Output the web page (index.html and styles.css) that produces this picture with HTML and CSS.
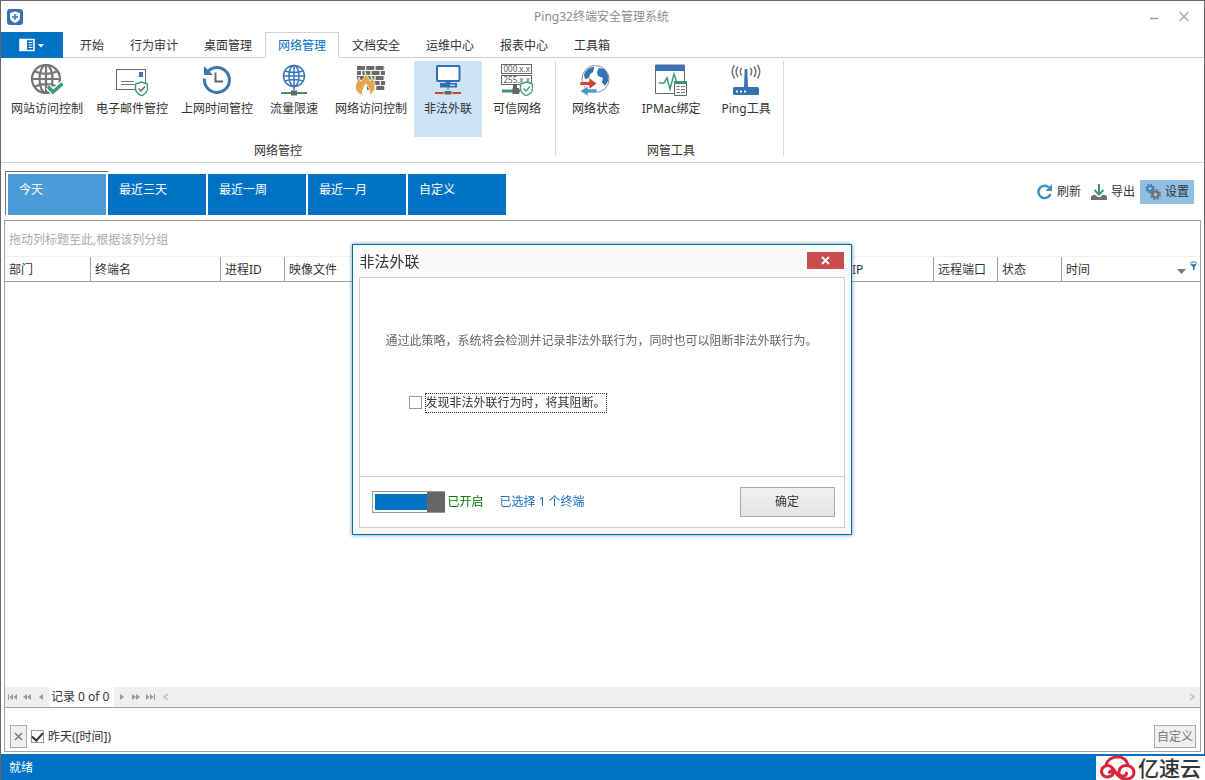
FILE: index.html
```html
<!DOCTYPE html>
<html lang="zh-CN">
<head>
<meta charset="utf-8">
<title>Ping32终端安全管理系统</title>
<link rel="stylesheet" href="styles.css">
</head>
<body>
<div class="window">
  <header class="titlebar">
    <svg class="app-icon" width="16" height="16" viewBox="0 0 16 16"><rect width="16" height="16" rx="3" fill="#3a6fb7"/><path d="M8 2.500l5 1.500v4.500c0 2.500-2 4-5 5.500-3-1.500-5-3-5-5.500V4z" fill="#fff"/><path d="M8 5v6M5 8h6" stroke="#3a6fb7" stroke-width="1.500"/></svg>
    <h1 class="title">Ping32终端安全管理系统</h1>
    <div class="window-buttons">
      <button class="plain" aria-label="最小化"><svg width="10" height="12" viewBox="0 0 10 12"><path d="M1 7.500h8" stroke="#999" stroke-width="1.500"/></svg></button>
      <button class="plain" aria-label="关闭"><svg width="12" height="12" viewBox="0 0 12 12"><path d="M1.500 1l9 9M10.500 1l-9 9" stroke="#aaa" stroke-width="1.500"/></svg></button>
    </div>
  </header>

  <nav class="tabs">
    <button class="file-button" aria-label="菜单"><svg width="26" height="14" viewBox="0 0 26 14"><rect x="1" y="1.500" width="14" height="11" fill="#0072c6" stroke="#fff" stroke-width="1.500"/><path d="M1 1h7v12H1z" fill="#fff"/><path d="M9.500 4.500h4M9.500 7h4M9.500 9.500h4" stroke="#fff"/><path d="M19 6h6l-3 3.500z" fill="#fff"/></svg></button>
    <button class="tab">开始</button>
    <button class="tab">行为审计</button>
    <button class="tab">桌面管理</button>
    <button class="tab selected">网络管理</button>
    <button class="tab">文档安全</button>
    <button class="tab">运维中心</button>
    <button class="tab">报表中心</button>
    <button class="tab">工具箱</button>
  </nav>

  <section class="ribbon">
    <div class="group">
      <div class="items">
        <button class="item"><svg width="32" height="32" viewBox="0 0 32 32" fill="none"><g stroke="#757575" stroke-width="2.200"><circle cx="15" cy="15" r="14"/><ellipse cx="15" cy="15" rx="6.500" ry="14"/><path d="M15 1v28M1 15h28M4 7.500c7 3 15 3 22 0M4 22.500c7-3 15-3 22 0"/></g><path d="M17 22.500l5 5.500 9.500-8.500" stroke="#fff" stroke-width="6"/><path d="M17 22.500l5 5.500 9.500-8.500" stroke="#3a9d78" stroke-width="3.500"/></svg><span>网站访问控制</span></button>
        <button class="item"><svg width="32" height="32" viewBox="0 0 32 32" fill="none"><rect x=".5" y="5.500" width="29" height="20" stroke="#666"/><path d="M23 8h4v5h-4z" fill="#3e76b5"/><path d="M5 17.500h13M5 20.500h13" stroke="#777"/><path d="M25.500 18l6 2v5c0 3-2.500 5-6 7-3.500-2-6-4-6-7v-5z" fill="#fff" stroke="#3a9d78" stroke-width="1.500"/><path d="M22.500 24.500l2.500 2.500 4-4.500" stroke="#666" stroke-width="1.500"/></svg><span>电子邮件管控</span></button>
        <button class="item"><svg width="32" height="32" viewBox="0 0 32 32" fill="none"><path d="M3.500 14.500A12.500 12.500 0 1 0 16 3.500c-4 0-7 1.500-9.500 4.500" stroke="#3e76ab" stroke-width="3"/><path d="M3 2v9h9z" fill="#3e76ab"/><path d="M14.500 8.500v9h7.500" stroke="#666" stroke-width="2"/></svg><span>上网时间管控</span></button>
        <button class="item"><svg width="32" height="32" viewBox="0 0 32 32" fill="none"><g stroke="#3874b8" stroke-width="1.500"><circle cx="16" cy="12" r="10.500"/><ellipse cx="16" cy="12" rx="5" ry="10.500"/><path d="M16 1.500V26M5.500 12h21M7 7c6 2 12 2 18 0M7 17c6-2 12-2 18 0"/></g><path d="M3 29h26" stroke="#3f946f" stroke-width="2"/><path d="M13 26.500h6v5h-6z" fill="#666"/></svg><span>流量限速</span></button>
        <button class="item"><svg width="32" height="32" viewBox="0 0 32 32" fill="none"><g stroke="#6a6a6a" stroke-width="4"><path d="M2 4h28" stroke-dasharray="8 1.300"/><path d="M2 9h28" stroke-dasharray="4 1.300 8 1.300 8 1.300"/><path d="M2 14h28" stroke-dasharray="8 1.300"/><path d="M4 19h26" stroke-dasharray="6 1.300"/><path d="M12 24h18" stroke-dasharray="8 1.300"/></g><path d="M10 7c1 5 4 6 5 10 1-1 1.500-2 1-5 3 4 4.500 7 4 11-.5 4-3 7-6 8.500 2-4 0-8-3.500-12-1 4-4.500 7-2.500 12C3 30 0 26 .5 22c.5-3 2-5 3.500-9l1.500 4C9 15 10.500 12 10 7z" fill="#e3a64f" stroke="#fff" stroke-width=".7"/></svg><span>网络访问控制</span></button>
        <button class="item active"><svg width="32" height="32" viewBox="0 0 32 32" fill="none"><rect x="5" y="2" width="22.500" height="15" rx="1" fill="#fff" stroke="#2f70b5" stroke-width="2"/><path d="M16 17v3" stroke="#2f70b5" stroke-width="5"/><path d="M8 19h17v4.500H8z" fill="#2f70b5"/><path d="M18 21.200h5" stroke="#fff"/><path d="M16 23v4" stroke="#666"/><path d="M3 29h26" stroke="#cf4433" stroke-width="2"/><path d="M12 26.500h8v4.500h-8z" fill="#666" stroke="#cde4f6"/></svg><span>非法外联</span></button>
        <button class="item"><svg width="32" height="32" viewBox="0 0 32 32" fill="none"><g stroke="#666"><rect x=".5" y=".5" width="30" height="9"/><rect x=".5" y="11.500" width="30" height="9"/></g><g class="icon-digits" fill="#555"><text x="2.500" y="8">000.x.x</text><text x="2.500" y="19">255.x.x</text></g><path d="M1 27h18" stroke="#3f946f" stroke-width="3"/><path d="M14 21v3" stroke="#666" stroke-width="4"/><path d="M11.500 24h6.500v6h-6.500z" fill="#666"/><path d="M25.500 18l6 2v5c0 3-2.500 5-6 7-3.500-2-6-4-6-7v-5z" fill="#fff" stroke="#4b9e81" stroke-width="1.500"/><path d="M22.500 24.500l2.500 2.500 4-4.500" stroke="#4b9e81" stroke-width="1.500"/></svg><span>可信网络</span></button>
      </div>
      <div class="group-name">网络管控</div>
    </div>
    <div class="group tools">
      <div class="items">
        <button class="item"><svg width="32" height="32" viewBox="0 0 32 32" fill="none"><circle cx="15.500" cy="15" r="13.500" fill="#fff" stroke="#888"/><path d="M14 3c-5 0-9 4-10 8l1 4 4-1 1-4 3-2 1-3zM19 4l5 1c3 3 5 6 4 12l-3 5-3-4 1-4-5-2-1-4z" fill="#3472b4"/><path d="M0 17.500h9v-4l8 6-8 6v-4H0z" fill="#d4452f" stroke="#fff" stroke-width=".8"/><path d="M17 25H8v-3l-8 5 8 5v-3h9z" fill="#4a9bc8" stroke="#fff" stroke-width=".6"/></svg><span>网络状态</span></button>
        <button class="item"><svg width="32" height="32" viewBox="0 0 32 32" fill="none"><path d="M.5 1v28.500h29V1z" fill="#fff" stroke="#666"/><path d="M0 1h30v6H0z" fill="#3c73b5"/><path d="M4 19h5l3-5 3 11 4-15 3 9h3" stroke="#3a9d78" stroke-width="1.500"/><path d="M19.500 17.500h12v14h-12z" fill="#fff" stroke="#666"/><path d="M19 17h13v3H19z" fill="#3f946f"/><path d="M21.500 22.500h3M26 22.500h4M21.500 25.500h3M26 25.500h4M21.500 28.500h3M26 28.500h4" stroke="#777"/></svg><span>IPMac绑定</span></button>
        <button class="item"><svg width="32" height="32" viewBox="0 0 32 32" fill="none"><path d="M14 23l.7-18h2.600l.7 18z" fill="#3c73b5"/><rect x="3" y="23" width="26" height="8" rx="1.500" fill="#3472ac"/><path d="M6 27.500h2M10 27.500h2M14 27.500h2" stroke="#fff" stroke-width="2"/><path d="M11.500 4c-1.500 2.500-1.500 5 0 7.500M8 2.500c-2.500 3.500-2.500 7 0 10.500M4.500 1C1.500 5.500 1.500 10 4.500 14.500M20.500 4c1.500 2.500 1.500 5 0 7.500M24 2.500c2.500 3.500 2.500 7 0 10.500M27.500 1c3 4.500 3 9 0 13.500" stroke="#777" stroke-width="1.500"/></svg><span>Ping工具</span></button>
      </div>
      <div class="group-name">网管工具</div>
    </div>
  </section>

  <section class="toolbar">
    <div class="ranges">
      <button class="range current">今天</button>
      <button class="range">最近三天</button>
      <button class="range">最近一周</button>
      <button class="range">最近一月</button>
      <button class="range">自定义</button>
    </div>
    <div class="actions">
      <button class="action"><svg width="16" height="16" viewBox="0 0 16 16" fill="none"><path d="M12 3.500A6.200 6.200 0 1 0 13.500 10" stroke="#3f93ba" stroke-width="2.400"/><path d="M15 0v7H8.500z" fill="#3f93ba"/></svg>刷新</button>
      <button class="action"><svg width="16" height="16" viewBox="0 0 16 16" fill="none"><path d="M8 0v10" stroke="#3a9d78" stroke-width="2"/><path d="M3.500 6L8 10.500 12.500 6" stroke="#3a9d78" stroke-width="2"/><path d="M0 12.500l2-1.500h2.500l2 2h3l2-2H14l2 1.500V16H0z" fill="#707070"/></svg>导出</button>
      <button class="action pressed"><svg width="16" height="16" viewBox="0 0 16 16" fill="none"><circle cx="5" cy="4.500" r="2.500" stroke="#3a73b2" stroke-width="1.500"/><circle cx="5" cy="4.500" r="4" stroke="#3a73b2" stroke-width="1.500" stroke-dasharray="1.500 1.640"/><circle cx="10.500" cy="10.500" r="3" stroke="#707070" stroke-width="2.200"/><circle cx="10.500" cy="10.500" r="4.700" stroke="#707070" stroke-width="1.600" stroke-dasharray="2 1.690"/></svg>设置</button>
    </div>
  </section>

  <main class="grid">
    <div class="group-hint">拖动列标题至此,根据该列分组</div>
    <table class="records">
      <colgroup><col class="col-dept"><col class="col-name"><col class="col-small"><col><col class="col-ip"><col class="col-small"><col class="col-small"><col class="col-time"></colgroup>
      <thead><tr>
        <th>部门</th><th>终端名</th><th>进程ID</th><th>映像文件</th><th>远程IP</th><th>远程端口</th><th>状态</th>
        <th><div class="sorted">时间<svg width="22" height="20" viewBox="0 0 22 20"><path d="M1 9h9l-4.500 5z" fill="#777"/><ellipse cx="17.500" cy="3.500" rx="3" ry="1.500" fill="#fff" stroke="#1878bd"/><path d="M14.500 4.500h6l-2 2.500v3h-1.500V7z" fill="#1878bd"/></svg></div></th>
      </tr></thead>
    </table>
    <div class="rows"></div>
    <div class="navigator">
      <div class="nav-buttons">
        <button class="plain" aria-label="第一条"><svg width="10" height="8" viewBox="0 0 10 8" fill="#999"><path d="M0 1h1v6H0zM5 1v6L1.500 4zM9 1v6L5.500 4z"/></svg></button>
        <button class="plain" aria-label="上一页"><svg width="10" height="8" viewBox="0 0 10 8" fill="#999"><path d="M5 1v6L1 4zM9 1v6L5 4z"/></svg></button>
        <button class="plain" aria-label="上一条"><svg width="10" height="8" viewBox="0 0 10 8" fill="#999"><path d="M7 1v6L3 4z"/></svg></button>
      </div>
      <span class="count">记录 0 of 0</span>
      <div class="nav-buttons">
        <button class="plain" aria-label="下一条"><svg width="10" height="8" viewBox="0 0 10 8" fill="#999"><path d="M3 1v6l4-3z"/></svg></button>
        <button class="plain" aria-label="下一页"><svg width="10" height="8" viewBox="0 0 10 8" fill="#999"><path d="M1 1v6l4-3zM5 1v6l4-3z"/></svg></button>
        <button class="plain" aria-label="最后一条"><svg width="10" height="8" viewBox="0 0 10 8" fill="#999"><path d="M1 1v6l3.500-3zM5 1v6l3.500-3zM9 1h1v6H9z"/></svg></button>
      </div>
      <div class="scrollbar">
        <button class="plain" aria-label="向左"><svg width="6" height="8" viewBox="0 0 6 8" fill="none"><path d="M5 1L1 4l4 3" stroke="#bbb" stroke-width="1.500"/></svg></button>
        <button class="plain" aria-label="向右"><svg width="6" height="8" viewBox="0 0 6 8" fill="none"><path d="M1 1l4 3-4 3" stroke="#bbb" stroke-width="1.500"/></svg></button>
      </div>
    </div>
    <div class="filter">
      <button class="small-button clear" aria-label="清除"><svg width="9" height="9" viewBox="0 0 9 9"><path d="M1 1l7 7M8 1L1 8" stroke="#777" stroke-width="1.500"/></svg></button>
      <label class="check"><input type="checkbox" checked><span>昨天([时间])</span></label>
      <button class="small-button custom">自定义</button>
    </div>
  </main>

  <footer class="status">
    <span>就绪</span>
    <div class="brand"><svg width="36" height="26" viewBox="0 0 36 26" fill="none" stroke="#d9243c" stroke-width="3" stroke-linecap="round"><path d="M6 10.500C7 5 12 2 17.500 2S27 5 28 10.500"/><path d="M9.500 17.500c0-2 3.500-2 3.500.5 0 4-8 5.500-10.500 1.500C0 15 3 10.500 8 10.500c7 0 7 13.500 18 13.500 5 0 8-3 8-6.500 0-4.500-4-7-8-7-5 0-7.500 4-7 8 .5 3.500 7.500 3.500 7.500-.5"/></svg><span>亿速云</span></div>
  </footer>
</div>

<div class="overlay">
  <div class="dialog" role="dialog" aria-labelledby="dialog-title">
    <div class="dialog-head">
      <h2 id="dialog-title">非法外联</h2>
      <button class="dialog-close" aria-label="关闭"><svg width="9" height="9" viewBox="0 0 9 9"><path d="M1 1l7 7M8 1L1 8" stroke="#fff" stroke-width="1.800"/></svg></button>
    </div>
    <div class="dialog-body">
      <div class="policy">
        <p>通过此策略，系统将会检测并记录非法外联行为，同时也可以阻断非法外联行为。</p>
        <label class="check"><input type="checkbox"><span class="focused">发现非法外联行为时，将其阻断。</span></label>
      </div>
      <div class="dialog-foot">
        <label class="switch"><input type="checkbox" role="switch" checked><span>已开启</span></label>
        <a class="terminals" href="#">已选择 1 个终端</a>
        <button class="ok">确定</button>
      </div>
    </div>
  </div>
</div>
</body>
</html>
```

FILE: styles.css
```css
* { box-sizing: border-box; }

body {
  margin: 0;
  font: 12px/16px "Noto Sans", "Noto Sans CJK SC", sans-serif;
  color: #333;
  background: #fff;
}

button, input {
  font: inherit;
  color: inherit;
  margin: 0;
}

button {
  border: 0;
  padding: 0;
  background: none;
}

svg { display: block; flex: none; }

.plain { display: flex; align-items: center; justify-content: center; }

.window {
  min-height: 100vh;
  display: flex;
  flex-direction: column;
  border: solid #666;
  border-width: 1px 1px 0;
}

/* Title bar */
.titlebar {
  display: grid;
  grid-template-columns: 1fr auto 1fr;
  align-items: center;
  height: 31px;
  padding: 0 14px 0 6px;
}

.title {
  margin: 0;
  padding-left: 6px;
  font-size: 12px;
  font-weight: 400;
  color: #8c8c8c;
}

.window-buttons { display: flex; justify-content: flex-end; gap: 19px; }

/* Tabs */
.tabs {
  display: flex;
  height: 26px;
  border-bottom: 1px solid #d2d2d2;
}

.file-button {
  display: flex;
  align-items: center;
  justify-content: center;
  width: 62px;
  height: 26px;
  margin-right: 4px;
  background: #0072c6;
}

.tab {
  height: 26px;
  padding: 2px 12px 0;
  border: 1px solid transparent;
}

.tab.selected {
  color: #0072c6;
  background: #fff;
  border-color: #d2d2d2;
  border-bottom-color: #fff;
}

/* Ribbon */
.ribbon {
  display: flex;
  padding: 3px 0 6px;
  border-bottom: 1px solid #d2d2d2;
}

.group {
  display: flex;
  flex-direction: column;
  padding: 0 4px;
  border-right: 1px solid #d9d9d9;
}

.group.tools { padding: 0 0 0 3px; }

.items { display: flex; gap: 1px; }

.item {
  display: flex;
  flex-direction: column;
  align-items: center;
  gap: 5px;
  min-width: 68px;
  height: 76px;
  padding: 3px 6px;
  white-space: nowrap;
}

.tools .item { min-width: 74px; }
.item.active { background: #cde4f6; }
.icon-digits { font-size: 8px; }

.group-name {
  height: 19px;
  padding-top: 6px;
  text-align: center;
}

/* Range tiles and actions */
.toolbar {
  display: flex;
  align-items: center;
  justify-content: space-between;
  padding: 8px 10px 5px 4px;
}

.ranges { display: flex; gap: 2px; }

.range {
  display: flex;
  width: 98px;
  height: 41px;
  margin-top: 3px;
  padding: 8px 11px;
  color: #fff;
  background: #0072c6;
}

.range.current {
  width: 103px;
  height: 44px;
  margin: 0 -2px 0 0;
  padding: 10px 13px;
  border: solid #7d6a60;
  border-width: 1px 0 0 1px;
  background: linear-gradient(#4a9bd8, #4a9bd8) 2px 2px / 98px 41px no-repeat;
}

.actions { display: flex; padding-bottom: 2px; }

.action {
  display: flex;
  align-items: center;
  gap: 4px;
  height: 24px;
  padding: 0 5px;
}

.action.pressed { background: #90bfe2; }

/* Record grid */
.grid {
  flex: 1;
  display: flex;
  flex-direction: column;
  margin: 0 3px 2px;
  border: 1px solid #a0a0a0;
}

.group-hint {
  height: 36px;
  padding: 11px 4px 0;
  color: #aaa;
  border-bottom: 1px solid #f0f0f0;
}

.records {
  width: 100%;
  table-layout: fixed;
  border-collapse: separate;
  border-spacing: 0;
}

.col-dept { width: 86px; }
.col-name { width: 130px; }
.col-small { width: 64px; }
.col-ip { width: 110px; }
.col-time { width: 138px; }

.records th {
  height: 25px;
  padding: 1px 0 0 4px;
  font-weight: 400;
  text-align: left;
  white-space: nowrap;
  border: solid #a0a0a0;
  border-width: 0 1px 1px 0;
}

.records th:last-child { border-right: 0; }

.sorted {
  display: flex;
  align-items: center;
  justify-content: space-between;
  padding-right: 2px;
}

.rows { flex: 1; }

.navigator {
  display: flex;
  align-items: stretch;
  height: 21px;
  border-bottom: 1px solid #a0a0a0;
}

.nav-buttons {
  display: flex;
  gap: 4px;
  padding: 0 3px;
  background: #efefef;
}

.count { padding: 2px 5px 0 2px; }

.scrollbar {
  flex: 1;
  display: flex;
  justify-content: space-between;
  padding: 0 5px;
  background: #efefef;
}

.filter {
  display: flex;
  align-items: flex-start;
  gap: 4px;
  height: 43px;
  padding: 17px 4px 0 5px;
}

.filter .check { height: 23px; }

.small-button {
  display: flex;
  align-items: center;
  justify-content: center;
  height: 23px;
  border: 1px solid #aaa;
  background: #efefef;
}

.clear { width: 17px; }
.custom { margin-left: auto; padding: 0 2px; color: #777; }

.check { display: flex; align-items: center; gap: 4px; }

.check input {
  appearance: none;
  display: grid;
  place-items: center;
  width: 13px;
  height: 13px;
  border: 1px solid #999;
  background: #fff;
}

.check input:checked::after {
  content: "";
  width: 9px;
  height: 5px;
  border: solid #333;
  border-width: 0 0 2px 2px;
  transform: translateY(-1px) rotate(-48deg);
}

/* Status bar */
.status {
  display: flex;
  align-items: center;
  justify-content: space-between;
  height: 26px;
  margin-right: -1px;
  padding: 2px 0 0 8px;
  color: #fff;
  background: #0072c6;
}

.brand {
  display: flex;
  align-items: center;
  gap: 2px;
  height: 24px;
  padding: 0 4px;
  color: #333;
  background: #fff;
  font-size: 21px;
  font-weight: 500;
  line-height: 24px;
}

/* Dialog */
.overlay {
  position: fixed;
  inset: 0;
  display: flex;
  align-items: center;
  justify-content: center;
  padding: 0 2px 2px 0;
}

.dialog {
  width: 500px;
  padding: 0 6px 6px;
  border: 1px solid #0b69b0;
  background: #fafafa;
  box-shadow: 0 0 4px #5f93bb;
}

.dialog-head {
  display: flex;
  align-items: center;
  justify-content: space-between;
  height: 32px;
  padding: 0 1px;
}

.dialog-head h2 {
  margin: 0;
  font-size: 15px;
  font-weight: 400;
}

.dialog-close {
  display: flex;
  align-items: center;
  justify-content: center;
  width: 37px;
  height: 17px;
  background: #c84c50;
}

.dialog-body { border: 1px solid #ccc; background: #fff; }

.policy {
  height: 199px;
  padding: 55px 26px;
  border-bottom: 1px solid #ccc;
}

.policy p { margin: 0 0 45px; color: #666; white-space: nowrap; }
.policy .check { padding-left: 23px; }
.focused { outline: 1px dotted #333; padding: 1px 0; }

.dialog-foot {
  display: flex;
  align-items: center;
  padding: 10px 9px 10px 12px;
}

.switch { display: flex; align-items: center; gap: 3px; color: #008000; }

.switch input {
  appearance: none;
  width: 73px;
  height: 22px;
  padding: 2px 0 2px 2px;
  border: 1px solid #999;
  border-right: 0;
  background:
    linear-gradient(#666, #666) right / 18px 100% no-repeat border-box,
    linear-gradient(#0072c6, #0072c6) content-box;
}

.terminals { margin-left: 16px; color: #1a6fc4; text-decoration: none; }

.ok {
  width: 95px;
  height: 30px;
  margin-left: auto;
  border: 1px solid #aaa;
  background: linear-gradient(#f0f0f0, #e4e4e4);
}
```
